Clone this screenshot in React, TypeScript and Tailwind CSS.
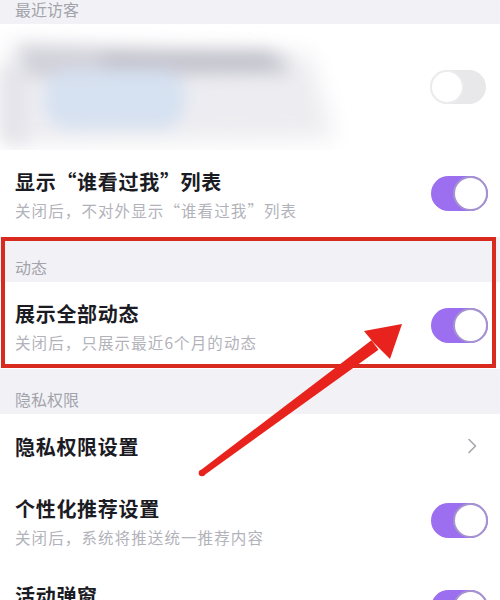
import React from "react";

const FONT = { fontFamily: '"Noto Sans CJK SC", "Noto Sans", sans-serif' };

function Toggle({ on }: { on: boolean }) {
  if (on) {
    return (
      <div className="w-[57px] h-[35px] rounded-full bg-[#9b6ff0] flex justify-end shrink-0">
        <div className="w-[35px] h-[35px] rounded-full bg-white border-[2.5px] border-[#a493cf]" />
      </div>
    );
  }
  return (
    <div className="w-[56px] h-[34px] rounded-full bg-[#e8e8ea] flex justify-start shrink-0">
      <div className="w-[34px] h-[34px] rounded-full bg-white border-[2px] border-[#ececee]" />
    </div>
  );
}

function Header({ text }: { text: string }) {
  return (
    <div className="h-[45px] bg-[#f2f2f6] px-[15px] pt-[20px]">
      <div className="text-[16px] leading-[20px] text-[#a3a3ab]">{text}</div>
    </div>
  );
}

function Row({ title, sub, tall, right }: { title: string; sub?: string; tall?: boolean; right: React.ReactNode }) {
  return (
    <div className={`bg-white flex items-center justify-between pl-[15px] pr-[12px] ${tall ? "h-[87px]" : "h-[63px]"}`}>
      <div className={tall ? "pt-[2px]" : "pt-[3px]"}>
        <div className="text-[20px] leading-[26px] font-semibold text-[#1b1b24] tracking-[0.7px]">{title}</div>
        {tall && (
          <div className="h-[22px] text-[15.5px] leading-[22px] mt-[4px] text-[#b2b2ba] tracking-[1.1px]">{sub}</div>
        )}
      </div>
      {right}
    </div>
  );
}

function Chevron() {
  return (
    <svg width="12" height="16" viewBox="0 0 12 16" className="mr-[10px]">
      <path d="M3 1.5 L9.5 8 L3 14.5" fill="none" stroke="#a6a6ae" strokeWidth="1.6" strokeLinecap="round" strokeLinejoin="round" />
    </svg>
  );
}

function BlurredVisitors() {
  return (
    <svg width="360" height="126" viewBox="0 0 360 126" className="shrink-0 -ml-[15px]">
      <defs>
        <filter id="bl" x="-30%" y="-60%" width="160%" height="220%">
          <feGaussianBlur stdDeviation="11" />
        </filter>
        <filter id="bl2" x="-30%" y="-60%" width="160%" height="220%">
          <feGaussianBlur stdDeviation="8" />
        </filter>
      </defs>
      <g filter="url(#bl)">
        <path d="M8 18 L310 30 L335 115 L8 120 Z" fill="#ededf1" />
      </g>
      <g filter="url(#bl2)">
        <path d="M20 22 L285 30 L290 52 L25 54 Z" fill="#d2d2da" />
        <rect x="100" y="26" width="175" height="20" rx="10" fill="#c4c4ce" />
        <rect x="45" y="46" width="140" height="58" rx="24" fill="#d6e1f1" />
        <rect x="0" y="40" width="28" height="80" rx="10" fill="#e4e4ea" />
      </g>
    </svg>
  );
}

export default function App() {
  return (
    <div className="relative w-[500px] h-[600px] overflow-hidden bg-white" style={FONT}>
      <div className="h-[24px] bg-[#f2f2f6] px-[15px]">
        <div className="text-[16px] leading-[18px] text-[#a3a3ab]">最近访客</div>
      </div>
      <div className="h-[126px] bg-white flex items-center justify-between pl-[15px] pr-[14px] overflow-hidden">
        <BlurredVisitors />
        <Toggle on={false} />
      </div>
      <Row tall title="显示“谁看过我”列表" sub="关闭后，不对外显示“谁看过我”列表" right={<Toggle on />} />
      <div className="relative">
        <Header text="动态" />
        <Row tall title="展示全部动态" sub="关闭后，只展示最近6个月的动态" right={<Toggle on />} />
        <div className="absolute top-0 bottom-[1px] left-[1px] right-[4px] border-[4px] border-[#d92a20] pointer-events-none" />
      </div>
      <Header text="隐私权限" />
      <Row title="隐私权限设置" right={<Chevron />} />
      <Row tall title="个性化推荐设置" sub="关闭后，系统将推送统一推荐内容" right={<Toggle on />} />
      <Row tall title="活动弹窗" right={<Toggle on />} />

      <svg className="absolute inset-0 pointer-events-none" width="500" height="600" viewBox="0 0 500 600">
        <defs>
          <filter id="soft" x="-10%" y="-10%" width="120%" height="120%">
            <feGaussianBlur stdDeviation="0.7" />
          </filter>
        </defs>
        <g filter="url(#soft)" fill="#e8241b">
          <polygon points="203.8,475.4 200.2,470.6 371.5,340.2 378.5,349.8" />
          <circle cx="202" cy="473" r="3.3" />
          <polygon points="402,324 364,331 373,342 390,359" />
        </g>
      </svg>
    </div>
  );
}
